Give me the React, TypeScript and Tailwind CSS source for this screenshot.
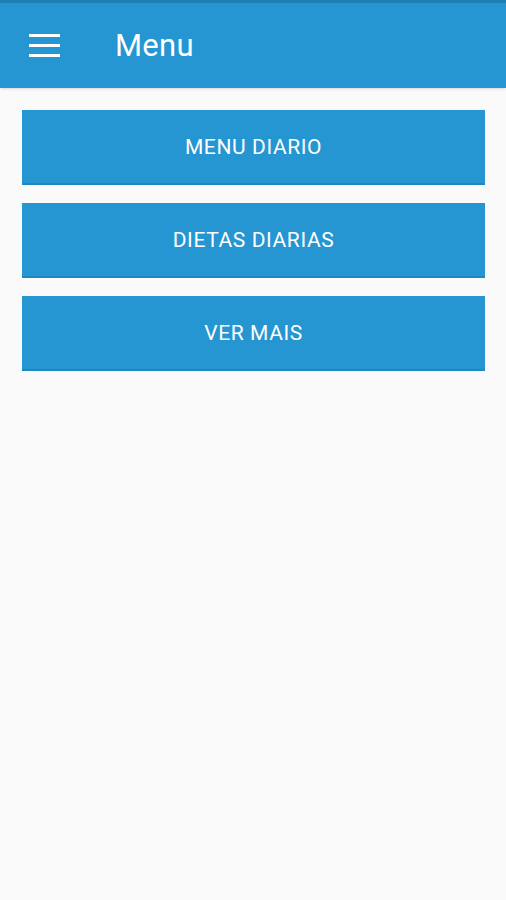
const items = ["MENU DIARIO", "DIETAS DIARIAS", "VER MAIS"]

export default function App() {
    return (
        <div className="w-[506px] h-[900px] bg-[#fafafa] font-['Roboto',sans-serif]">
            {/* Toolbar */}
            <header className="h-[88px] bg-[#2596d1] border-t-[3px] border-[#1f7fb3] flex items-center shadow-sm">
                <button className="ml-[29px] w-[31px] flex flex-col gap-[7px]">
                    <span className="block h-[3px] bg-white" />
                    <span className="block h-[3px] bg-white" />
                    <span className="block h-[3px] bg-white" />
                </button>
                <h1 className="ml-[55px] text-white text-[31px] leading-none tracking-[0.3px]">Menu</h1>
            </header>

            {/* Buttons */}
            <div className="px-[22px] pt-[22px] flex flex-col gap-[18px] w-[507px]">
                {items.map((label) => (
                    <button
                        key={label}
                        className="h-[75px] w-full pt-[3px] bg-[#2596d1] border-b-2 border-[#1e88c2] text-white text-[21px] tracking-[0.6px]"
                    >
                        {label}
                    </button>
                ))}
            </div>
        </div>
    )
}
